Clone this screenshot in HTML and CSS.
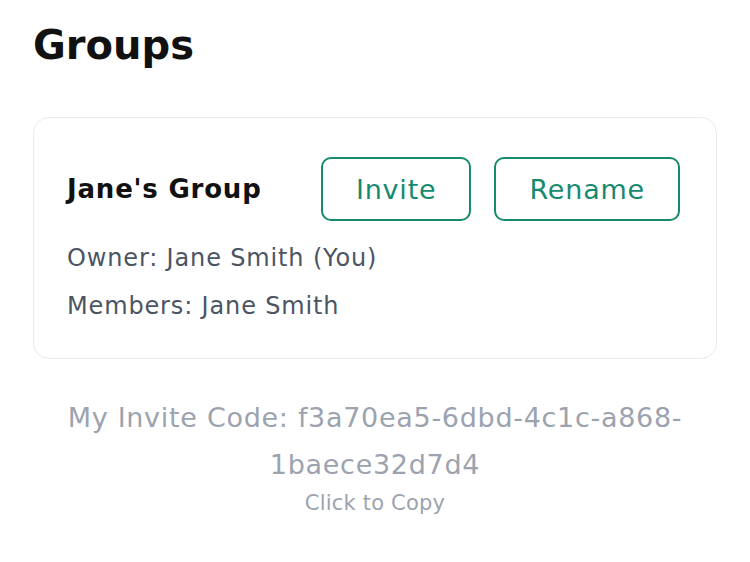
FILE: index.html
```html
<!DOCTYPE html>
<html>
<head>
<meta charset="utf-8">
<link rel="stylesheet" href="styles.css">
</head>
<body>
<main class="page">
  <h1 class="title">Groups</h1>
  <section class="card">
    <div class="card-head">
      <h2 class="group-name">Jane's Group</h2>
      <div class="actions">
        <button class="btn">Invite</button>
        <button class="btn">Rename</button>
      </div>
    </div>
    <p class="info">Owner: Jane Smith (You)</p>
    <p class="info">Members: Jane Smith</p>
  </section>
  <div class="invite">
    <p class="code">My Invite Code: f3a70ea5-6dbd-4c1c-a868-1baece32d7d4</p>
    <p class="copy">Click to Copy</p>
  </div>
</main>
</body>
</html>
```

FILE: styles.css
```css
* { box-sizing: border-box; }
html, body { margin: 0; padding: 0; background: #ffffff; }
body { font-family: "DejaVu Sans", "Noto Sans", sans-serif; }
.page { padding: 17px 33px 0 33px; }
.title {
  margin: 0 0 44px 0;
  font-size: 40px;
  font-weight: 700;
  color: #111111;
  line-height: 56px;
}
.card {
  border: 1px solid #e9eaec;
  border-radius: 16px;
  padding: 39px 36px 28px 33px;
}
.card-head {
  display: flex;
  align-items: center;
  justify-content: space-between;
  margin-bottom: 13px;
}
.group-name {
  margin: 0;
  font-size: 26px;
  font-weight: 700;
  letter-spacing: 0.8px;
  color: #111111;
}
.actions { display: flex; gap: 23px; }
.btn {
  font-family: inherit;
  font-size: 27px;
  letter-spacing: 0.8px;
  color: #168a6f;
  background: #fff;
  border: 2px solid #168a6f;
  border-radius: 10px;
  height: 64px;
  padding: 0 33px;
}
.info {
  margin: 0;
  font-size: 24px;
  letter-spacing: 0.85px;
  line-height: 48px;
  color: #4b5563;
}
.invite { text-align: center; padding: 35px 30px 0; }
.code {
  margin: 0;
  font-size: 27px;
  letter-spacing: 0.7px;
  line-height: 47px;
  color: #9ca3af;
}
.copy {
  margin: 0;
  font-size: 21px;
  letter-spacing: 0.2px;
  line-height: 30px;
  color: #9ca3af;
}
```
